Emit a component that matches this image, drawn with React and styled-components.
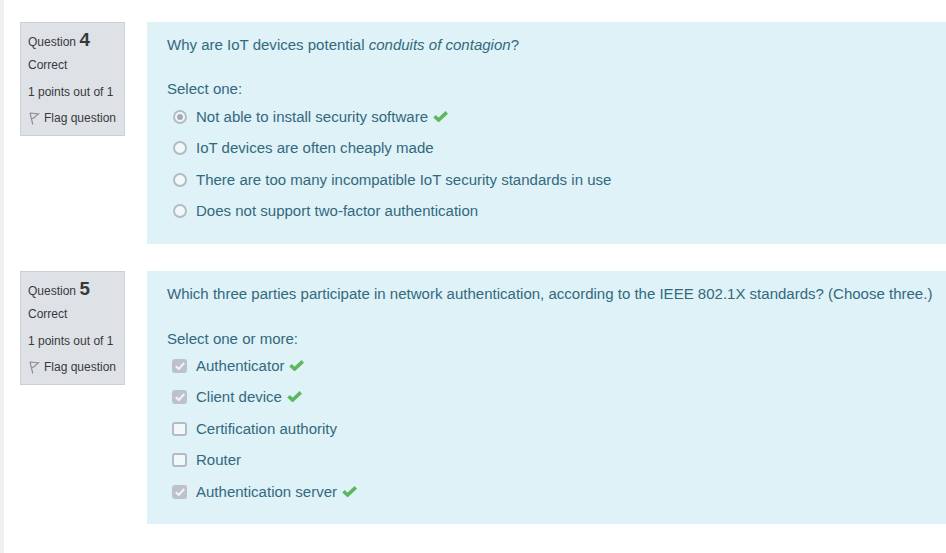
import React from 'react'
import styled, { createGlobalStyle } from 'styled-components'

const GlobalStyle = createGlobalStyle`
  html, body {
    margin: 0;
    padding: 0;
    background: #fff;
    font-family: "Liberation Sans", Arial, sans-serif;
  }
`

const Page = styled.div`
  width: 946px;
  height: 553px;
  box-sizing: border-box;
  overflow: hidden;
  border-left: 4px solid #eef0f3;
  padding: 22px 0 0 16px;
`

const Question = styled.div`
  display: flex;
  align-items: flex-start;
  gap: 22px;
  margin-bottom: 27px;
`

const Info = styled.div`
  box-sizing: border-box;
  flex: none;
  width: 105px;
  height: 114px;
  padding: 6px 0 0 7px;
  background: #dee2e6;
  border: 1px solid #cad0d7;
  color: #373a3c;
  font-size: 12px;
  line-height: 18px;
`

const QNumber = styled.div`
  height: 27px;
  white-space: nowrap;
  span {
    font-size: 18.75px;
    font-weight: bold;
    line-height: 22px;
  }
`

const InfoLine = styled.div`
  height: ${p => p.$h}px;
  white-space: nowrap;
`

const FlagRow = styled.div`
  display: flex;
  align-items: center;
  gap: 4px;
  white-space: nowrap;
  height: 18px;
  padding-left: 1px;
`

const Content = styled.div`
  box-sizing: border-box;
  flex: 1;
  min-width: 0;
  height: ${p => p.$h}px;
  padding: 13px 0 0 20px;
  background: #def2f8;
  color: #33697d;
  font-size: 15.02px;
  line-height: 20px;
  white-space: nowrap;
`

const Prompt = styled.div`
  margin-bottom: ${p => p.$gap}px;
`

const Answers = styled.div`
  display: flex;
  flex-direction: column;
  padding: ${p => p.$top}px 0 0 6px;
`

const Answer = styled.div`
  display: flex;
  align-items: center;
  height: 31.5px;
  gap: 9px;
`

const Radio = styled.span`
  box-sizing: border-box;
  flex: none;
  display: flex;
  align-items: center;
  justify-content: center;
  width: 14px;
  height: 14px;
  border-radius: 50%;
  border: 2px solid #b5bac3;
  background: #f1f8fb;
  &::after {
    content: "";
    display: ${p => (p.$on ? 'block' : 'none')};
    width: 6px;
    height: 6px;
    border-radius: 50%;
    background: #a5a9b4;
  }
`

const Box = styled.span`
  box-sizing: border-box;
  flex: none;
  display: flex;
  align-items: center;
  justify-content: center;
  width: 15px;
  height: 14px;
  margin-left: -1px;
  border-radius: 3px;
  border: 2px solid ${p => (p.$on ? '#bdc1cb' : '#b5bac3')};
  background: ${p => (p.$on ? '#bdc1cb' : '#f1f8fb')};
`

const Tick = styled.svg`
  margin-left: 5px;
  vertical-align: 0;
`

const FlagIcon = () => (
  <svg width="11" height="13" viewBox="0 0 11 13" fill="none" stroke="#858b93" strokeWidth="1.1">
    <path d="M1 1 L3.8 12.5 M1 1 L9.5 1.8 L6 4.5 L6 5.2 L2.4 7" />
  </svg>
)

const GreenTick = () => (
  <Tick width="15" height="11" viewBox="0 0 15 11">
    <path d="M1.5 5.2 L5.6 9 L13.8 1.4" fill="none" stroke="#5cb85c" strokeWidth="3.6" />
  </Tick>
)

const BoxTick = () => (
  <svg width="10" height="10" viewBox="0 0 10 10">
    <path d="M0.8 5.2 L3.8 8 L9.2 2" fill="none" stroke="#f1f4f7" strokeWidth="2" />
  </svg>
)

const questions = [
  {
    number: 4,
    height: 222,
    gap: 24,
    top: 2,
    label: 'Select one:',
    type: 'radio',
    prompt: <>Why are IoT devices potential <em>conduits of contagion</em>?</>,
    answers: [
      { text: 'Not able to install security software', on: true },
      { text: 'IoT devices are often cheaply made' },
      { text: 'There are too many incompatible IoT security standards in use' },
      { text: 'Does not support two-factor authentication' },
    ],
  },
  {
    number: 5,
    height: 253,
    gap: 25,
    top: 1,
    label: 'Select one or more:',
    type: 'check',
    prompt: 'Which three parties participate in network authentication, according to the IEEE 802.1X standards? (Choose three.)',
    answers: [
      { text: 'Authenticator', on: true },
      { text: 'Client device', on: true },
      { text: 'Certification authority' },
      { text: 'Router' },
      { text: 'Authentication server', on: true },
    ],
  },
]

export default function App() {
  return (
    <>
      <GlobalStyle />
      <Page>
        {questions.map(q => (
          <Question key={q.number}>
            <Info>
              <QNumber>Question <span>{q.number}</span></QNumber>
              <InfoLine $h={27}>Correct</InfoLine>
              <InfoLine $h={26}>1 points out of 1</InfoLine>
              <FlagRow><FlagIcon />Flag question</FlagRow>
            </Info>
            <Content $h={q.height}>
              <Prompt $gap={q.gap}>{q.prompt}</Prompt>
              <div>{q.label}</div>
              <Answers $top={q.top}>
                {q.answers.map(a => (
                  <Answer key={a.text}>
                    {q.type === 'radio'
                      ? <Radio $on={a.on} />
                      : <Box $on={a.on}>{a.on && <BoxTick />}</Box>}
                    <span>{a.text}{a.on && <GreenTick />}</span>
                  </Answer>
                ))}
              </Answers>
            </Content>
          </Question>
        ))}
      </Page>
    </>
  )
}
